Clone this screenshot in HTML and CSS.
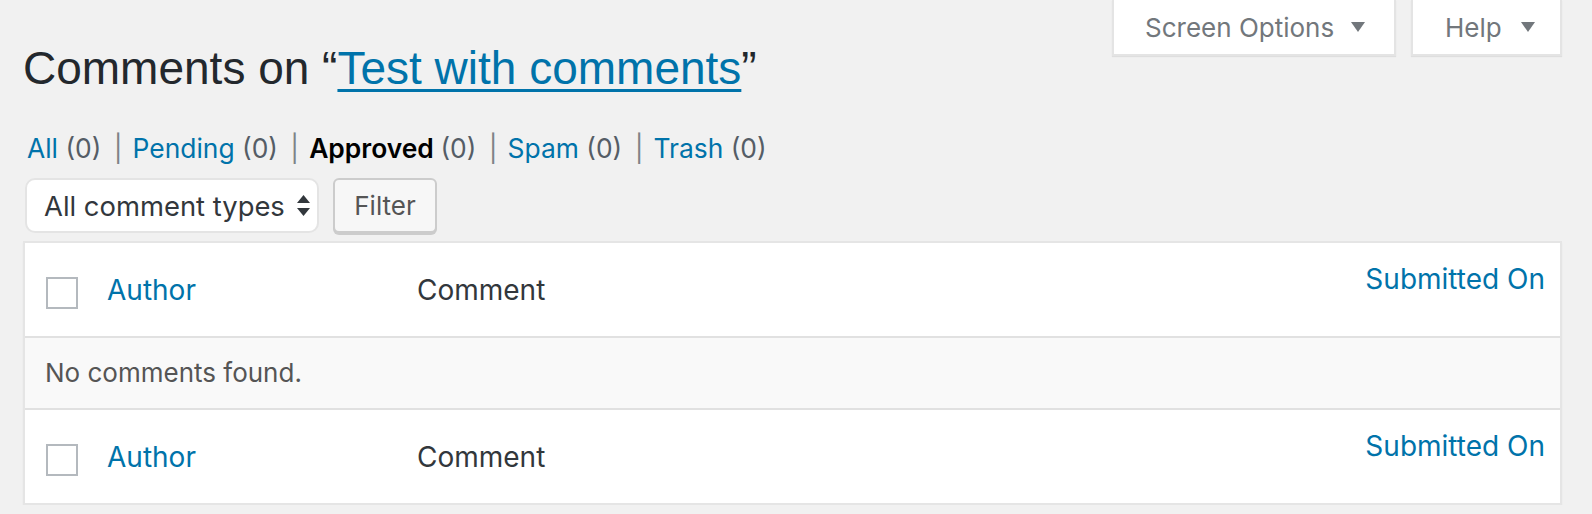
FILE: index.html
```html
<!DOCTYPE html>
<html lang="en">
<head>
  <meta charset="UTF-8">
  <meta name="viewport" content="width=device-width, initial-scale=1.0">
  <title>Comments on “Test with comments”</title>
  <link rel="stylesheet" href="styles.css">
</head>
<body>
  <div class="wrap">
    <div class="screen-links">
      <button type="button" class="screen-tab tab-options">
        Screen Options
        <svg class="tab-arrow" width="14" height="10" viewBox="0 0 14 10"><polygon points="0,0 14,0 7,10"/></svg>
      </button>
      <button type="button" class="screen-tab tab-help">
        Help
        <svg class="tab-arrow" width="14" height="10" viewBox="0 0 14 10"><polygon points="0,0 14,0 7,10"/></svg>
      </button>
    </div>

    <h1>Comments on “<a href="#">Test with comments</a>”</h1>

    <ul class="subsubsub">
      <li><a href="#">All <span class="count">(0)</span></a> <span class="sep">|</span></li>
      <li><a href="#">Pending <span class="count">(0)</span></a> <span class="sep">|</span></li>
      <li><a href="#" class="current">Approved <span class="count">(0)</span></a> <span class="sep">|</span></li>
      <li><a href="#">Spam <span class="count">(0)</span></a> <span class="sep">|</span></li>
      <li><a href="#">Trash <span class="count">(0)</span></a></li>
    </ul>

    <div class="tablenav">
      <div class="select-box">
        <span>All comment types</span>
        <svg class="updown" width="13" height="21" viewBox="0 0 13 21">
          <polygon points="6.5,0 13,8 0,8"/>
          <polygon points="0,13 13,13 6.5,21"/>
        </svg>
      </div>
      <button type="button" class="button">Filter</button>
    </div>

    <div class="list-table">
      <div class="row head">
        <div class="check-col"><span class="checkbox"></span></div>
        <div class="col-author"><a href="#">Author</a></div>
        <div class="col-comment">Comment</div>
        <div class="col-date"><a href="#">Submitted On</a></div>
      </div>
      <div class="row no-items">
        <div class="empty">No comments found.</div>
      </div>
      <div class="row foot">
        <div class="check-col"><span class="checkbox"></span></div>
        <div class="col-author"><a href="#">Author</a></div>
        <div class="col-comment">Comment</div>
        <div class="col-date"><a href="#">Submitted On</a></div>
      </div>
    </div>
  </div>
</body>
</html>
```

FILE: styles.css
```css
body {
    margin: 0;
    background: #f1f1f1;
    color: #444;
    font-family: Inter, "Liberation Sans", sans-serif;
}
a {
    color: #0073aa;
    text-decoration: none;
}
.wrap {
    padding: 0 30px 0 23px;
}

/* screen options / help tabs */
.screen-links {
    float: right;
    display: flex;
    gap: 15px;
}
.screen-tab {
    display: flex;
    align-items: center;
    gap: 17px;
    height: 56px;
    padding: 0 0 0 31px;
    background: #fff;
    border: 2px solid #e4e4e4;
    border-top: none;
    box-shadow: 0 1px 1px rgba(0, 0, 0, 0.08);
    color: #72777c;
    font-family: inherit;
    font-size: 26px;
}
.tab-options {
    width: 284px;
}
.tab-help {
    width: 151px;
    padding-left: 32px;
    gap: 19px;
}
.tab-arrow {
    fill: #72777c;
}

h1 {
    margin: 0;
    padding-top: 39px;
    font-family: "Liberation Sans", Arial, sans-serif;
    font-size: 46px;
    line-height: 58px;
    font-weight: 400;
    color: #23282d;
}
h1 a {
    text-decoration: underline;
    text-decoration-thickness: 3px;
    text-underline-offset: 5px;
}

.subsubsub {
    list-style: none;
    margin: 31px 0 0 4px;
    padding: 0;
    display: flex;
    font-size: 26.4px;
    line-height: 40px;
    color: #7e8387;
}
.subsubsub li {
    white-space: pre;
}
.subsubsub .count {
    color: #555d66;
}
.subsubsub .sep {
    margin: 0 10px 0 5px;
}
.subsubsub a.current {
    color: #000;
    font-weight: 600;
}
.subsubsub a.current .count {
    font-weight: 400;
}

/* filter bar */
.tablenav {
    display: flex;
    gap: 14px;
    margin: 10px 0 0 2px;
    height: 57px;
}
.select-box {
    box-sizing: border-box;
    width: 294px;
    height: 55px;
    display: flex;
    align-items: center;
    justify-content: space-between;
    padding: 0 7px 0 17px;
    background: #fff;
    border: 2px solid #e4e4e4;
    border-radius: 10px;
    font-size: 27.4px;
    color: #32373c;
}
.updown {
    fill: #32373c;
}
.button {
    box-sizing: border-box;
    height: 55px;
    width: 104px;
    padding: 0;
    background: #f7f7f7;
    border: 2px solid #cccccc;
    border-radius: 6px;
    box-shadow: 0 2px 0 #cccccc;
    font-family: inherit;
    font-size: 26px;
    color: #555;
}

/* list table */
.list-table {
    margin-top: 6px;
    background: #fff;
    border: 2px solid #e5e5e5;
    box-shadow: 0 2px 2px rgba(0, 0, 0, 0.04);
}
.row {
    display: grid;
    grid-template-columns: 60px 312px 1fr auto;
    align-items: center;
    height: 93px;
    font-size: 28px;
    line-height: 40px;
}
.row.head {
    border-bottom: 2px solid #e1e1e1;
}
.row.foot {
    border-top: 2px solid #e1e1e1;
}
.row.no-items {
    display: flex;
    height: 70px;
    background: #f9f9f9;
}
.check-col {
    padding-left: 21px;
    margin-top: 7px;
    height: 32px;
}
.checkbox {
    display: block;
    box-sizing: border-box;
    width: 32px;
    height: 32px;
    background: #fff;
    border: 2px solid #b4b9be;
}
.col-author {
    padding-left: 22px;
}
.col-comment {
    padding-left: 20px;
    color: #32373c;
}
.col-date {
    align-self: start;
    padding: 16px 15px 0 0;
    text-align: right;
}
.empty {
    padding-left: 20px;
    font-size: 26px;
    color: #555;
}
```
